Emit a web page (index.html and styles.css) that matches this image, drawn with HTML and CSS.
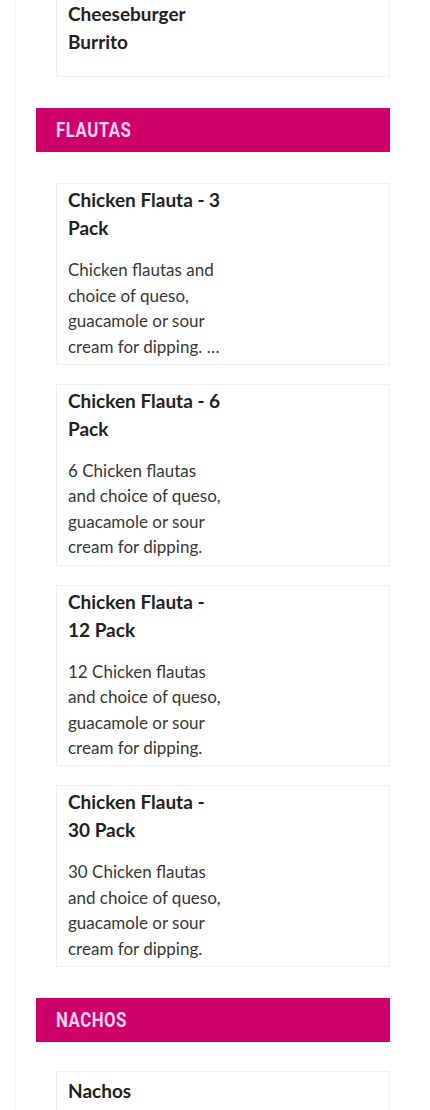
FILE: index.html
```html
<!DOCTYPE html>
<html>
<head>
<meta charset="utf-8">
<link rel="stylesheet" href="styles.css">
</head>
<body>
<div class="page">
  <div class="items">
    <div class="card card-cut">
      <div class="text">
        <h3 class="title">Cheeseburger Burrito</h3>
      </div>
    </div>
  </div>

  <h2 class="section"><span class="section-label">FLAUTAS</span></h2>
  <div class="items">
    <div class="card">
      <div class="text">
        <h3 class="title">Chicken Flauta - 3 Pack</h3>
        <p class="desc">Chicken flautas and choice of queso, guacamole or sour cream for dipping. …</p>
      </div>
    </div>
    <div class="card">
      <div class="text">
        <h3 class="title">Chicken Flauta - 6 Pack</h3>
        <p class="desc">6 Chicken flautas and choice of queso, guacamole or sour cream for dipping.</p>
      </div>
    </div>
    <div class="card">
      <div class="text">
        <h3 class="title">Chicken Flauta - 12 Pack</h3>
        <p class="desc">12 Chicken flautas and choice of queso, guacamole or sour cream for dipping.</p>
      </div>
    </div>
    <div class="card">
      <div class="text">
        <h3 class="title">Chicken Flauta - 30 Pack</h3>
        <p class="desc">30 Chicken flautas and choice of queso, guacamole or sour cream for dipping.</p>
      </div>
    </div>
  </div>

  <h2 class="section section-last"><span class="section-label">NACHOS</span></h2>
  <div class="items">
    <div class="card card-single">
      <div class="text">
        <h3 class="title">Nachos</h3>
      </div>
    </div>
  </div>
</div>
</body>
</html>
```
FILE: styles.css
```css
html, body {
  margin: 0;
  padding: 0;
  background: #ffffff;
}
body {
  font-family: "Lato", "Liberation Sans", sans-serif;
  color: #222222;
  height: 1110px;
  overflow: hidden;
}
.page {
  margin-left: 15px;
  border-left: 1px solid #f1f1f1;
  padding: 0 40px 0 20px;
  min-height: 1110px;
}
.items {
  padding-left: 20px;
  display: flex;
  flex-direction: column;
  gap: 19px;
}
.card {
  border: 1px solid #efefef;
  height: 181.75px;
  box-sizing: border-box;
  display: flex;
}
.card-cut {
  border-top: none;
  height: 77px;
}
.card-single {
  height: 60px;
}
.text {
  width: 157px;
  padding-left: 11px;
  padding-top: 2px;
}
.card-cut .text {
  padding-top: 0;
}
.card-single .text {
  padding-top: 5px;
}
.title {
  margin: 0;
  font-size: 19px;
  line-height: 28px;
  font-weight: 700;
  color: #222222;
}
.desc {
  margin: 15px 0 0 0;
  font-size: 17px;
  line-height: 25.5px;
  font-weight: 400;
  color: #383838;
}
.section {
  margin: 31px 0;
  height: 44px;
  line-height: 44px;
  padding-left: 20px;
  background: #d0006b;
  color: #fcd2ee;
  font-family: "Roboto", "Liberation Sans", sans-serif;
  font-weight: 700;
  font-size: 20px;
  letter-spacing: 0.6px;
}
.section-label {
  display: inline-block;
  transform: scaleX(0.84);
  transform-origin: left center;
}
.section-last {
  margin-bottom: 29px;
}
```
